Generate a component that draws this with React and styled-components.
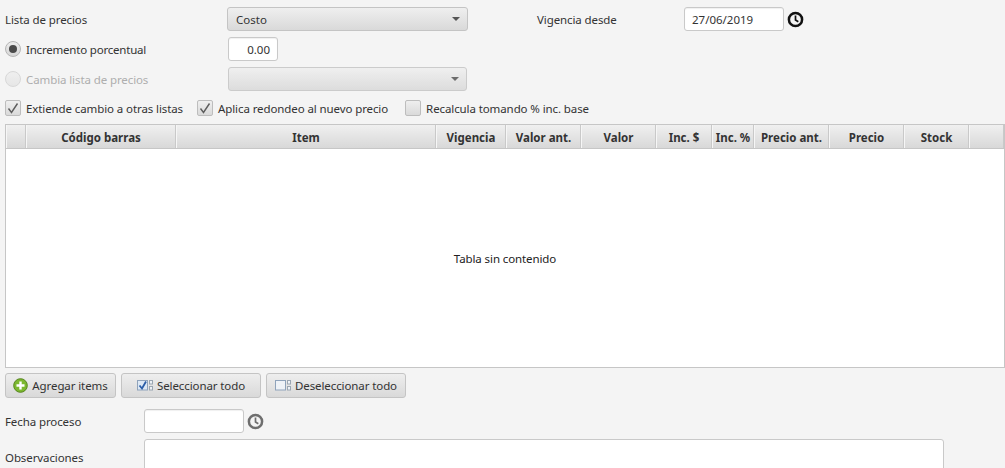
import React from "react";
import styled, { createGlobalStyle } from "styled-components";

const Global = createGlobalStyle`
  html, body {
    margin: 0;
    padding: 0;
    height: 468px;
    overflow: hidden;
    background: #f4f4f4;
    font-family: "Noto Sans", "Open Sans", sans-serif;
    font-size: 11.5px;
    color: #333;
  }
`;

const Page = styled.div`
  width: 1005px;
  height: 468px;
  overflow: hidden;
  box-sizing: border-box;
  padding: 7px 0 0 5px;
  display: flex;
  flex-direction: column;
`;

const Row = styled.div`
  display: flex;
  align-items: ${(p) => (p.$top ? "flex-start" : "center")};
  height: ${(p) => p.$h || 24}px;
  margin-bottom: ${(p) => p.$mb || 0}px;
`;

const Label = styled.span`
  width: ${(p) => p.$w || "auto"};
  margin-left: ${(p) => p.$ml || 0}px;
  margin-top: ${(p) => p.$mt || 0}px;
  flex: none;
  white-space: nowrap;
  letter-spacing: ${(p) => p.$sp || "-0.1px"};
  color: ${(p) => (p.$off ? "#aeaeae" : "#333")};
`;

const Combo = styled.div`
  width: ${(p) => p.$w}px;
  height: 24px;
  box-sizing: border-box;
  flex: none;
  display: flex;
  align-items: center;
  justify-content: space-between;
  padding: 0 7px 0 8px;
  border: 1px solid #c4c4c4;
  border-radius: 3px;
  background: linear-gradient(#efefef, #d9d9d9);
  opacity: ${(p) => (p.$off ? 0.85 : 1)};
`;

const Arrow = styled.i`
  width: 0;
  height: 0;
  border-left: 4px solid transparent;
  border-right: 4px solid transparent;
  border-top: 4px solid #555;
`;

const Input = styled.div`
  width: ${(p) => p.$w}px;
  height: 24px;
  box-sizing: border-box;
  flex: none;
  padding: 0 7px;
  display: flex;
  align-items: center;
  justify-content: ${(p) => (p.$right ? "flex-end" : "flex-start")};
  background: #fff;
  border: 1px solid #c9c9c9;
  border-radius: 3px;
  box-shadow: inset 0 1px 1px #f0f0f0;
`;

const Radio = styled.span`
  width: 16px;
  height: 16px;
  margin: 0 5px 0 0;
  box-sizing: border-box;
  flex: none;
  display: flex;
  align-items: center;
  justify-content: center;
  border-radius: 50%;
  border: 1px solid ${(p) => (p.$off ? "#d8d8d8" : "#b5b5b5")};
  background: ${(p) =>
    p.$off ? "linear-gradient(#efefef, #e6e6e6)" : "linear-gradient(#ececec, #d6d6d6)"};
  &::after {
    content: "";
    display: ${(p) => (p.$on ? "block" : "none")};
    width: 8px;
    height: 8px;
    border-radius: 50%;
    background: #4a4a4a;
  }
`;

const Check = styled.span`
  width: 16px;
  height: 16px;
  margin-right: 5px;
  box-sizing: border-box;
  flex: none;
  border: 1px solid #bdbdbd;
  border-radius: 2px;
  background: linear-gradient(#efefef, #dadada);
  display: flex;
  align-items: center;
  justify-content: center;
`;

const CheckItem = styled.div`
  display: flex;
  align-items: center;
  margin-right: ${(p) => p.$mr}px;
`;

const Table = styled.div`
  width: 1000px;
  height: 244px;
  box-sizing: border-box;
  flex: none;
  display: flex;
  flex-direction: column;
  border: 1px solid #c6c6c6;
  background: #fff;
`;

const Head = styled.div`
  display: flex;
  height: 24px;
  box-sizing: border-box;
  flex: none;
  background: linear-gradient(#f0f0f0, #d8d8d8);
  border-bottom: 1px solid #c6c6c6;
`;

const Col = styled.div`
  width: ${(p) => p.$w}px;
  flex: none;
  box-sizing: border-box;
  padding-top: 2px;
  display: flex;
  align-items: center;
  justify-content: center;
  font-weight: 700;
  white-space: nowrap;
  border-right: 1px solid #c9c9c9;
  border-left: 1px solid #f6f6f6;
  color: #333;
`;

const Empty = styled.div`
  flex: 1;
  display: flex;
  align-items: center;
  justify-content: center;
  color: #222;
  letter-spacing: -0.1px;
`;

const Toolbar = styled.div`
  display: flex;
  gap: 5px;
  margin: 5px 0 11px;
`;

const Button = styled.div`
  height: 25px;
  width: ${(p) => p.$w}px;
  box-sizing: border-box;
  display: flex;
  align-items: center;
  justify-content: center;
  gap: 4px;
  border: 1px solid #c4c4c4;
  border-radius: 3px;
  background: linear-gradient(#eeeeee, #d9d9d9);
  letter-spacing: -0.1px;
  white-space: nowrap;
`;

const TextArea = styled.div`
  width: 800px;
  height: 60px;
  box-sizing: border-box;
  flex: none;
  background: #fff;
  border: 1px solid #c9c9c9;
  border-radius: 3px;
`;

const ClockSvg = styled.svg`
  flex: none;
  margin-left: 3px;
`;

const Clock = ({ color }) => (
  <ClockSvg width="17" height="17" viewBox="0 0 17 17">
    <circle cx="8.5" cy="8.5" r="6.6" fill="none" stroke={color} strokeWidth="2.5" />
    <path d="M8.5 4.5V9l2.8 1.8" fill="none" stroke={color} strokeWidth="1.7" />
  </ClockSvg>
);

const Tick = () => (
  <svg width="12" height="12" viewBox="0 0 12 12">
    <path d="M1.5 6.5L4.5 10.5 10.5 1.5" fill="none" stroke="#5c5c5c" strokeWidth="1.4" />
  </svg>
);

const PlusIcon = () => (
  <svg width="15" height="15" viewBox="0 0 15 15">
    <circle cx="7.5" cy="7.5" r="6.8" fill="#7cb82f" stroke="#55851c" />
    <path d="M7.5 3.5v8M3.5 7.5h8" stroke="#fff" strokeWidth="2.4" />
  </svg>
);

const ListIcon = ({ checked }) => (
  <svg width="16" height="13" viewBox="0 0 16 13">
    <rect x="0.5" y="1.5" width="10" height="9.5" fill={checked ? "#dce8f5" : "#eef2f7"} stroke="#8fa3bb" />
    {checked && <path d="M2.5 6.5l2.5 3 4-7" fill="none" stroke="#2a5da8" strokeWidth="1.8" />}
    <rect x="12.5" y="1.5" width="3" height="3.5" fill="#eef2f7" stroke="#9aa6b2" />
    <rect x="12.5" y="7.5" width="3" height="3.5" fill="#eef2f7" stroke="#9aa6b2" />
  </svg>
);

const columns = [
  ["", 20],
  ["Código barras", 150],
  ["Item", 260],
  ["Vigencia", 70],
  ["Valor ant.", 75],
  ["Valor", 75],
  ["Inc. $", 56],
  ["Inc. %", 42],
  ["Precio ant.", 75],
  ["Precio", 75],
  ["Stock", 65],
  ["", 35],
];

export default function App() {
  return (
    <Page>
      <Global />
      <Row $mb={6}>
        <Label $w="222px">Lista de precios</Label>
        <Combo $w={241}>
          Costo
          <Arrow />
        </Combo>
        <Label $w="147px" $ml={69}>Vigencia desde</Label>
        <Input $w={100}>27/06/2019</Input>
        <Clock color="#111" />
      </Row>
      <Row $mb={6}>
        <Radio $on />
        <Label $w="202px" $sp="-0.2px">Incremento porcentual</Label>
        <Input $w={50} $right>0.00</Input>
      </Row>
      <Row $mb={9}>
        <Radio $off />
        <Label $w="202px" $off>Cambia lista de precios</Label>
        <Combo $w={239} $off>
          <span />
          <Arrow />
        </Combo>
      </Row>
      <Row $h={16} $mb={8}>
        <CheckItem $mr={14}>
          <Check><Tick /></Check>
          <Label>Extiende cambio a otras listas</Label>
        </CheckItem>
        <CheckItem $mr={17}>
          <Check><Tick /></Check>
          <Label>Aplica redondeo al nuevo precio</Label>
        </CheckItem>
        <CheckItem $mr={0}>
          <Check />
          <Label>Recalcula tomando % inc. base</Label>
        </CheckItem>
      </Row>
      <Table>
        <Head>
          {columns.map(([name, w], i) => (
            <Col key={i} $w={w}>{name}</Col>
          ))}
        </Head>
        <Empty>Tabla sin contenido</Empty>
      </Table>
      <Toolbar>
        <Button $w={111}><PlusIcon />Agregar items</Button>
        <Button $w={140}><ListIcon checked />Seleccionar todo</Button>
        <Button $w={140}><ListIcon />Deseleccionar todo</Button>
      </Toolbar>
      <Row $mb={6}>
        <Label $w="139px">Fecha proceso</Label>
        <Input $w={100} />
        <Clock color="#6e6e6e" />
      </Row>
      <Row $top>
        <Label $w="139px" $mt={11}>Observaciones</Label>
        <TextArea />
      </Row>
    </Page>
  );
}
